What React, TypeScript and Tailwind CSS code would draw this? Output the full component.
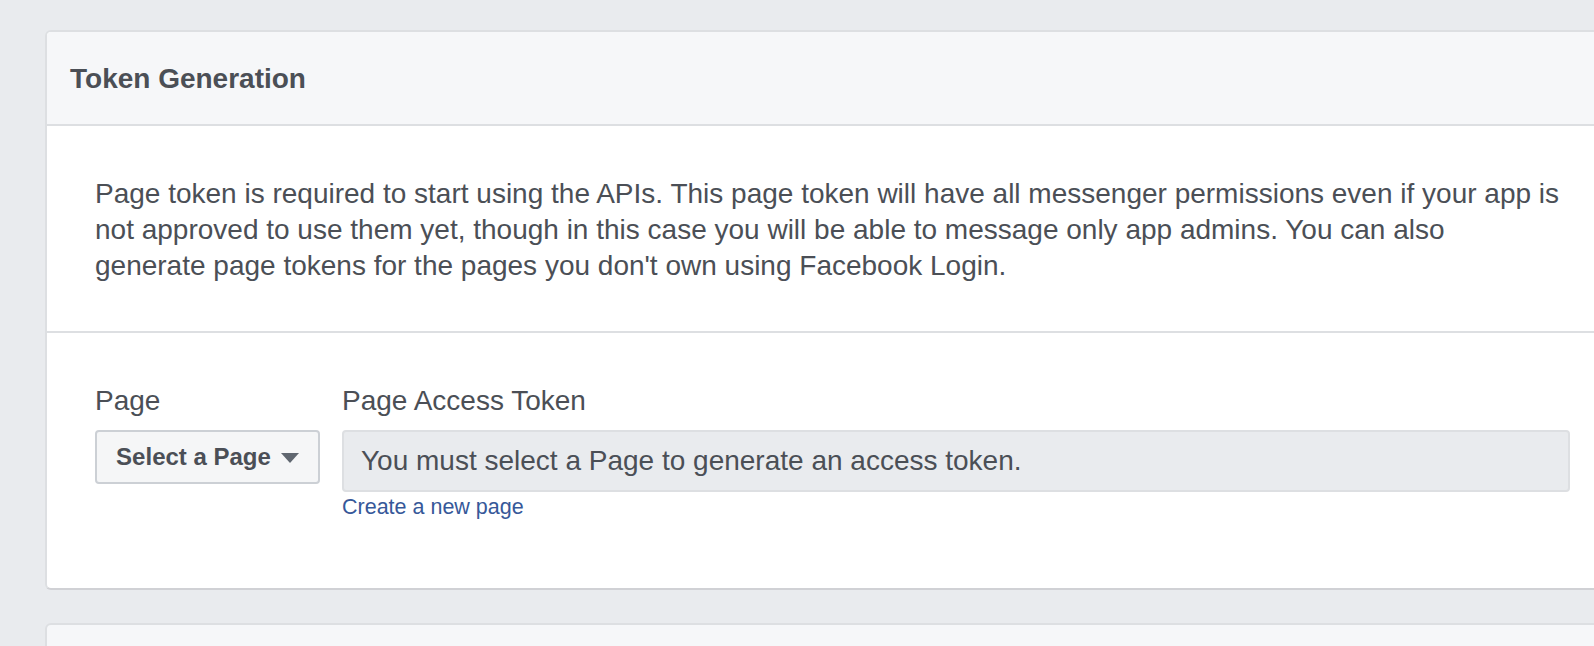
import React from "react";

export default function App() {
  return (
    <div
      className="w-[1594px] h-[646px] overflow-hidden bg-[#e9ebee] pt-[30px] pl-[45px] text-[#4b4f56]"
      style={{ fontFamily: '"Liberation Sans", Arial, Helvetica, sans-serif' }}
    >
      <div className="w-[1600px] rounded-[6px] border-2 border-[#dddfe2] border-b-[#d0d1d5] bg-white overflow-hidden">
        <div className="bg-[#f6f7f9] border-b-2 border-[#dddfe2] pl-[23px] pt-[29px] pb-[27px]">
          <h2 className="text-[28px] font-bold leading-[36px] text-[#4b4f56]">Token Generation</h2>
        </div>
        <div className="pl-[48px] pt-[50px] pb-[47px] border-b-2 border-[#dddfe2]">
          <p className="text-[28px] leading-[36px] whitespace-nowrap">
            Page token is required to start using the APIs. This page token will have all messenger permissions even if your app is
            <br />
            not approved to use them yet, though in this case you will be able to message only app admins. You can also
            <br />
            generate page tokens for the pages you don't own using Facebook Login.
          </p>
        </div>
        <div className="h-[255px] pl-[48px] pt-[50px] flex gap-[22px]">
          <div className="w-[225px] flex flex-col">
            <label className="text-[28px] leading-[36px]">Page</label>
            <button className="mt-[11px] w-[225px] h-[54px] rounded-[4px] border-2 border-[#ccd0d5] bg-[#f5f6f7] flex items-center justify-center gap-[10px] text-[24px] font-bold text-[#4b4f56]">
              <span className="leading-none">Select a Page</span>
              <svg width="18" height="10" viewBox="0 0 18 10" className="mt-[2px]">
                <path d="M0 0 H18 L9 10 Z" fill="#606770" />
              </svg>
            </button>
          </div>
          <div className="w-[1228px] flex flex-col">
            <label className="text-[28px] leading-[36px]">Page Access Token</label>
            <div className="mt-[11px] h-[62px] rounded-[4px] border-2 border-[#dddfe2] bg-[#e9ebee] flex items-center pl-[17px] text-[28px] text-[#4b4f56]">
              You must select a Page to generate an access token.
            </div>
            <a className="mt-[2px] text-[21.5px] leading-[26px] text-[#365899]" href="#">
              Create a new page
            </a>
          </div>
        </div>
      </div>
      <div className="mt-[33px] w-[1600px] h-[80px] rounded-[6px] border-2 border-[#dddfe2] bg-[#f6f7f9]" />
    </div>
  );
}
